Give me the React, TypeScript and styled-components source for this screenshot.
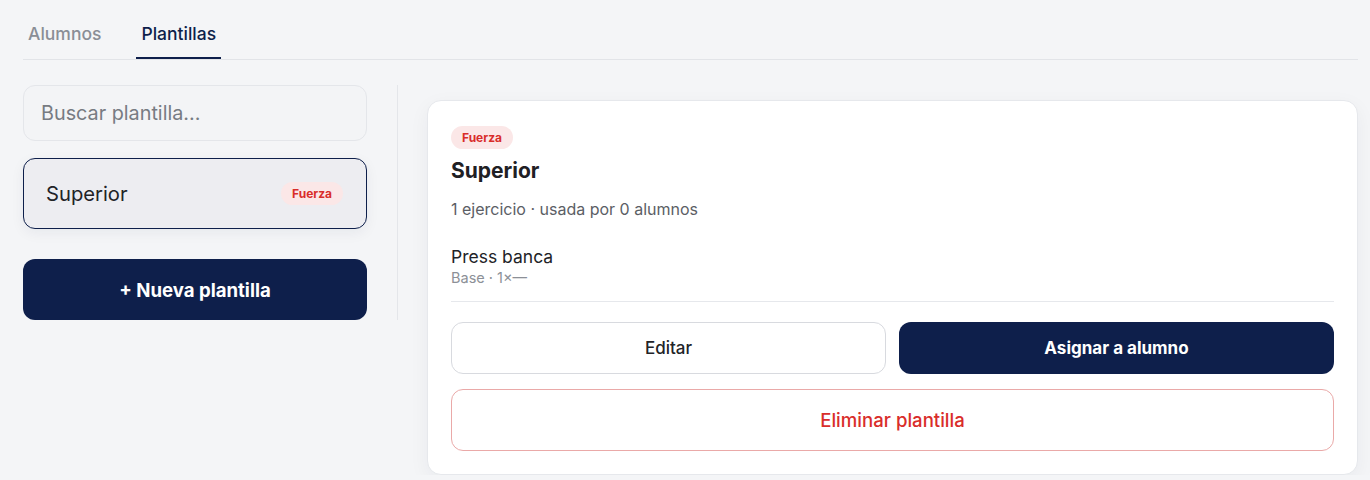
import React from "react";
import styled, { createGlobalStyle } from "styled-components";

const GlobalStyle = createGlobalStyle`
  html, body { margin: 0; padding: 0; background: #f4f5f7; }
  body { font-family: Inter, "Noto Sans", Arial, sans-serif; color: #1f2024; }
  * { box-sizing: border-box; }
`;

const NAVY = "#0e1f4b";
const RED = "#d92d2a";

const Page = styled.div`
  padding: 16px 12px 0 23px;
  width: 1370px;
`;

const TabList = styled.div`
  display: flex;
  gap: 30px;
  border-bottom: 1px solid #e2e4e8;
`;

const Tab = styled.div<{ $active?: boolean }>`
  padding: 8px 5px 13px;
  font-size: 17.5px;
  line-height: 20px;
  font-weight: 500;
  color: ${(p) => (p.$active ? NAVY : "#8a8e96")};
  border-bottom: 2px solid ${(p) => (p.$active ? NAVY : "transparent")};
`;

const Body = styled.div`
  display: grid;
  grid-template-columns: 375px 1fr;
  margin-top: 25px;
`;

const Sidebar = styled.div`
  display: flex;
  flex-direction: column;
  padding-right: 30px;
  border-right: 1px solid #e4e6ea;
  align-self: start;
`;

const Search = styled.div`
  height: 56px;
  border: 1px solid #e4e6ea;
  border-radius: 12px;
  background: #f3f4f6;
  display: flex;
  align-items: center;
  padding: 0 17px;
  font-size: 19.8px;
  color: #777b82;
`;

const ListItem = styled.div<{ $selected?: boolean }>`
  margin-top: 17px;
  height: 71px;
  border: 1px solid ${(p) => (p.$selected ? NAVY : "#e4e6ea")};
  border-radius: 12px;
  background: #ededf1;
  display: flex;
  align-items: center;
  justify-content: space-between;
  padding: 0 23px 0 22px;
  box-shadow: 0 4px 14px rgba(20, 30, 60, 0.06);
`;

const ItemName = styled.span`
  font-size: 20.2px;
  color: #222327;
`;

const Badge = styled.span`
  display: inline-flex;
  align-items: center;
  height: 23px;
  padding: 0 11px;
  border-radius: 12px;
  background: #fbe7e7;
  color: ${RED};
  font-size: 12px;
  font-weight: 700;
`;

const PrimaryButton = styled.button<{ $height: number }>`
  height: ${(p) => p.$height}px;
  border: none;
  border-radius: 12px;
  background: ${NAVY};
  color: #fff;
  font-family: inherit;
  font-size: 18.6px;
  font-weight: 700;
  cursor: pointer;
`;

const NewButton = styled(PrimaryButton)`
  margin-top: 30px;
`;

const Main = styled.div`
  padding: 15px 0 0 29px;
`;

const Card = styled.div`
  background: #fff;
  border: 1px solid #e6e8ec;
  border-radius: 14px;
  box-shadow: 0 6px 20px rgba(20, 30, 60, 0.05);
  padding: 25px 23px 23px;
  display: flex;
  flex-direction: column;
  align-items: stretch;
`;

const BadgeRow = styled.div`
  display: flex;
`;

const Title = styled.h2`
  margin: 8px 0 0;
  font-size: 21px;
  line-height: 28px;
  font-weight: 700;
  color: #1f2024;
`;

const Meta = styled.div`
  margin-top: 13px;
  font-size: 16px;
  line-height: 22px;
  color: #5b5e65;
`;

const Exercise = styled.div`
  margin-top: 26px;
  padding-bottom: 13px;
  border-bottom: 1px solid #e6e8ec;
`;

const ExName = styled.div`
  font-size: 17.5px;
  line-height: 22px;
  color: #222327;
`;

const ExSub = styled.div`
  font-size: 14.5px;
  line-height: 20px;
  color: #8c9097;
`;

const ButtonRow = styled.div`
  margin-top: 20px;
  display: grid;
  grid-template-columns: 1fr 1fr;
  gap: 13px;
`;

const OutlineButton = styled.button`
  height: 52px;
  border: 1px solid #d8dadf;
  border-radius: 12px;
  background: #fff;
  color: #222327;
  font-family: inherit;
  font-size: 17px;
  font-weight: 500;
  cursor: pointer;
`;

const AssignButton = styled(PrimaryButton)`
  font-size: 17px;
`;

const DangerButton = styled.button`
  margin-top: 15px;
  height: 62px;
  border: 1px solid #eaa9a8;
  border-radius: 12px;
  background: #fff;
  color: ${RED};
  font-family: inherit;
  font-size: 18.6px;
  font-weight: 500;
  cursor: pointer;
`;

export default function App() {
  return (
    <Page>
      <GlobalStyle />
      <TabList>
        <Tab>Alumnos</Tab>
        <Tab $active>Plantillas</Tab>
      </TabList>
      <Body>
        <Sidebar>
          <Search>Buscar plantilla...</Search>
          <ListItem $selected>
            <ItemName>Superior</ItemName>
            <Badge>Fuerza</Badge>
          </ListItem>
          <NewButton $height={61}>+ Nueva plantilla</NewButton>
        </Sidebar>
        <Main>
          <Card>
            <BadgeRow>
              <Badge>Fuerza</Badge>
            </BadgeRow>
            <Title>Superior</Title>
            <Meta>1 ejercicio · usada por 0 alumnos</Meta>
            <Exercise>
              <ExName>Press banca</ExName>
              <ExSub>Base · 1×—</ExSub>
            </Exercise>
            <ButtonRow>
              <OutlineButton>Editar</OutlineButton>
              <AssignButton $height={52}>Asignar a alumno</AssignButton>
            </ButtonRow>
            <DangerButton>Eliminar plantilla</DangerButton>
          </Card>
        </Main>
      </Body>
    </Page>
  );
}
